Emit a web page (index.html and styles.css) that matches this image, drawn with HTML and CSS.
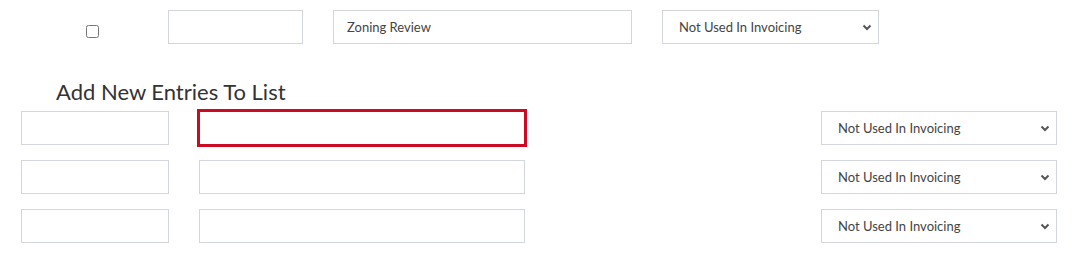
FILE: index.html
```html
<!DOCTYPE html>
<html>
<head>
<meta charset="utf-8">
<link rel="stylesheet" href="styles.css">
</head>
<body>
<div class="page">
  <div class="top-row">
    <div class="check-cell"><input type="checkbox" class="check"></div>
    <input type="text" class="field field-code">
    <input type="text" class="field field-name" value="Zoning Review">
    <div class="select-wrap select-top">
      <select class="select"><option>Not Used In Invoicing</option></select>
      <svg class="chev" width="10" height="7" viewBox="0 0 10 7"><path d="M1.5 1.5 L5 5 L8.5 1.5" fill="none" stroke="#555" stroke-width="2"/></svg>
    </div>
  </div>

  <h2 class="heading">Add New Entries To List</h2>

  <div class="entries">
    <div class="entry-row">
      <input type="text" class="field field-code-new">
      <input type="text" class="field field-name-new is-error">
      <div class="select-wrap select-new">
        <select class="select"><option>Not Used In Invoicing</option></select>
        <svg class="chev" width="10" height="7" viewBox="0 0 10 7"><path d="M1.5 1.5 L5 5 L8.5 1.5" fill="none" stroke="#555" stroke-width="2"/></svg>
      </div>
    </div>
    <div class="entry-row">
      <input type="text" class="field field-code-new">
      <input type="text" class="field field-name-new">
      <div class="select-wrap select-new">
        <select class="select"><option>Not Used In Invoicing</option></select>
        <svg class="chev" width="10" height="7" viewBox="0 0 10 7"><path d="M1.5 1.5 L5 5 L8.5 1.5" fill="none" stroke="#555" stroke-width="2"/></svg>
      </div>
    </div>
    <div class="entry-row">
      <input type="text" class="field field-code-new">
      <input type="text" class="field field-name-new">
      <div class="select-wrap select-new">
        <select class="select"><option>Not Used In Invoicing</option></select>
        <svg class="chev" width="10" height="7" viewBox="0 0 10 7"><path d="M1.5 1.5 L5 5 L8.5 1.5" fill="none" stroke="#555" stroke-width="2"/></svg>
      </div>
    </div>
  </div>
</div>
</body>
</html>
```

FILE: styles.css
```css
* { box-sizing: border-box; }

html, body {
  margin: 0;
  padding: 0;
  background: #ffffff;
}

body {
  font-family: Lato, "Open Sans", "Liberation Sans", sans-serif;
  color: #333;
}

.page {
  width: 1078px;
  height: 256px;
  overflow: hidden;
}

.top-row {
  display: flex;
  align-items: center;
  gap: 30px;
  padding: 10px 0 0 21px;
}

.check-cell {
  width: 117px;
  height: 34px;
  display: flex;
  align-items: center;
  padding-left: 65px;
  padding-top: 9px;
}

.check {
  width: 13px;
  height: 13px;
  margin: 0;
}

.field {
  height: 34px;
  border: 1px solid #d3d5df;
  border-radius: 0;
  background: #fff;
  font-family: inherit;
  font-size: 13px;
  color: #444;
  padding: 0 13px;
  margin: 0;
  outline: none;
}

.field-code { width: 135px; }
.field-name { width: 299px; }

.select-wrap {
  position: relative;
  height: 34px;
}

.select-top { width: 217px; }

.select {
  appearance: none;
  -webkit-appearance: none;
  width: 100%;
  height: 100%;
  border: 1px solid #d3d5df;
  border-radius: 0;
  background: #fff;
  font-family: inherit;
  font-size: 13px;
  color: #444;
  padding: 0 16px;
  margin: 0;
}

.chev {
  position: absolute;
  right: 7px;
  top: 14px;
  pointer-events: none;
}

.heading {
  margin: 0;
  padding: 34px 0 0 56px;
  font-size: 22px;
  font-weight: 400;
  line-height: 28px;
  color: #333;
}

.entries {
  display: flex;
  flex-direction: column;
  gap: 15px;
  padding: 5px 21px 0 21px;
}

.entry-row {
  display: flex;
  align-items: center;
  gap: 30px;
}

.field-code-new { width: 148px; }
.field-name-new { width: 326px; }

.field-name-new.is-error {
  outline: 3px solid #cc0a24;
  outline-offset: -1px;
}

.select-new {
  width: 236px;
  margin-left: auto;
}
```
